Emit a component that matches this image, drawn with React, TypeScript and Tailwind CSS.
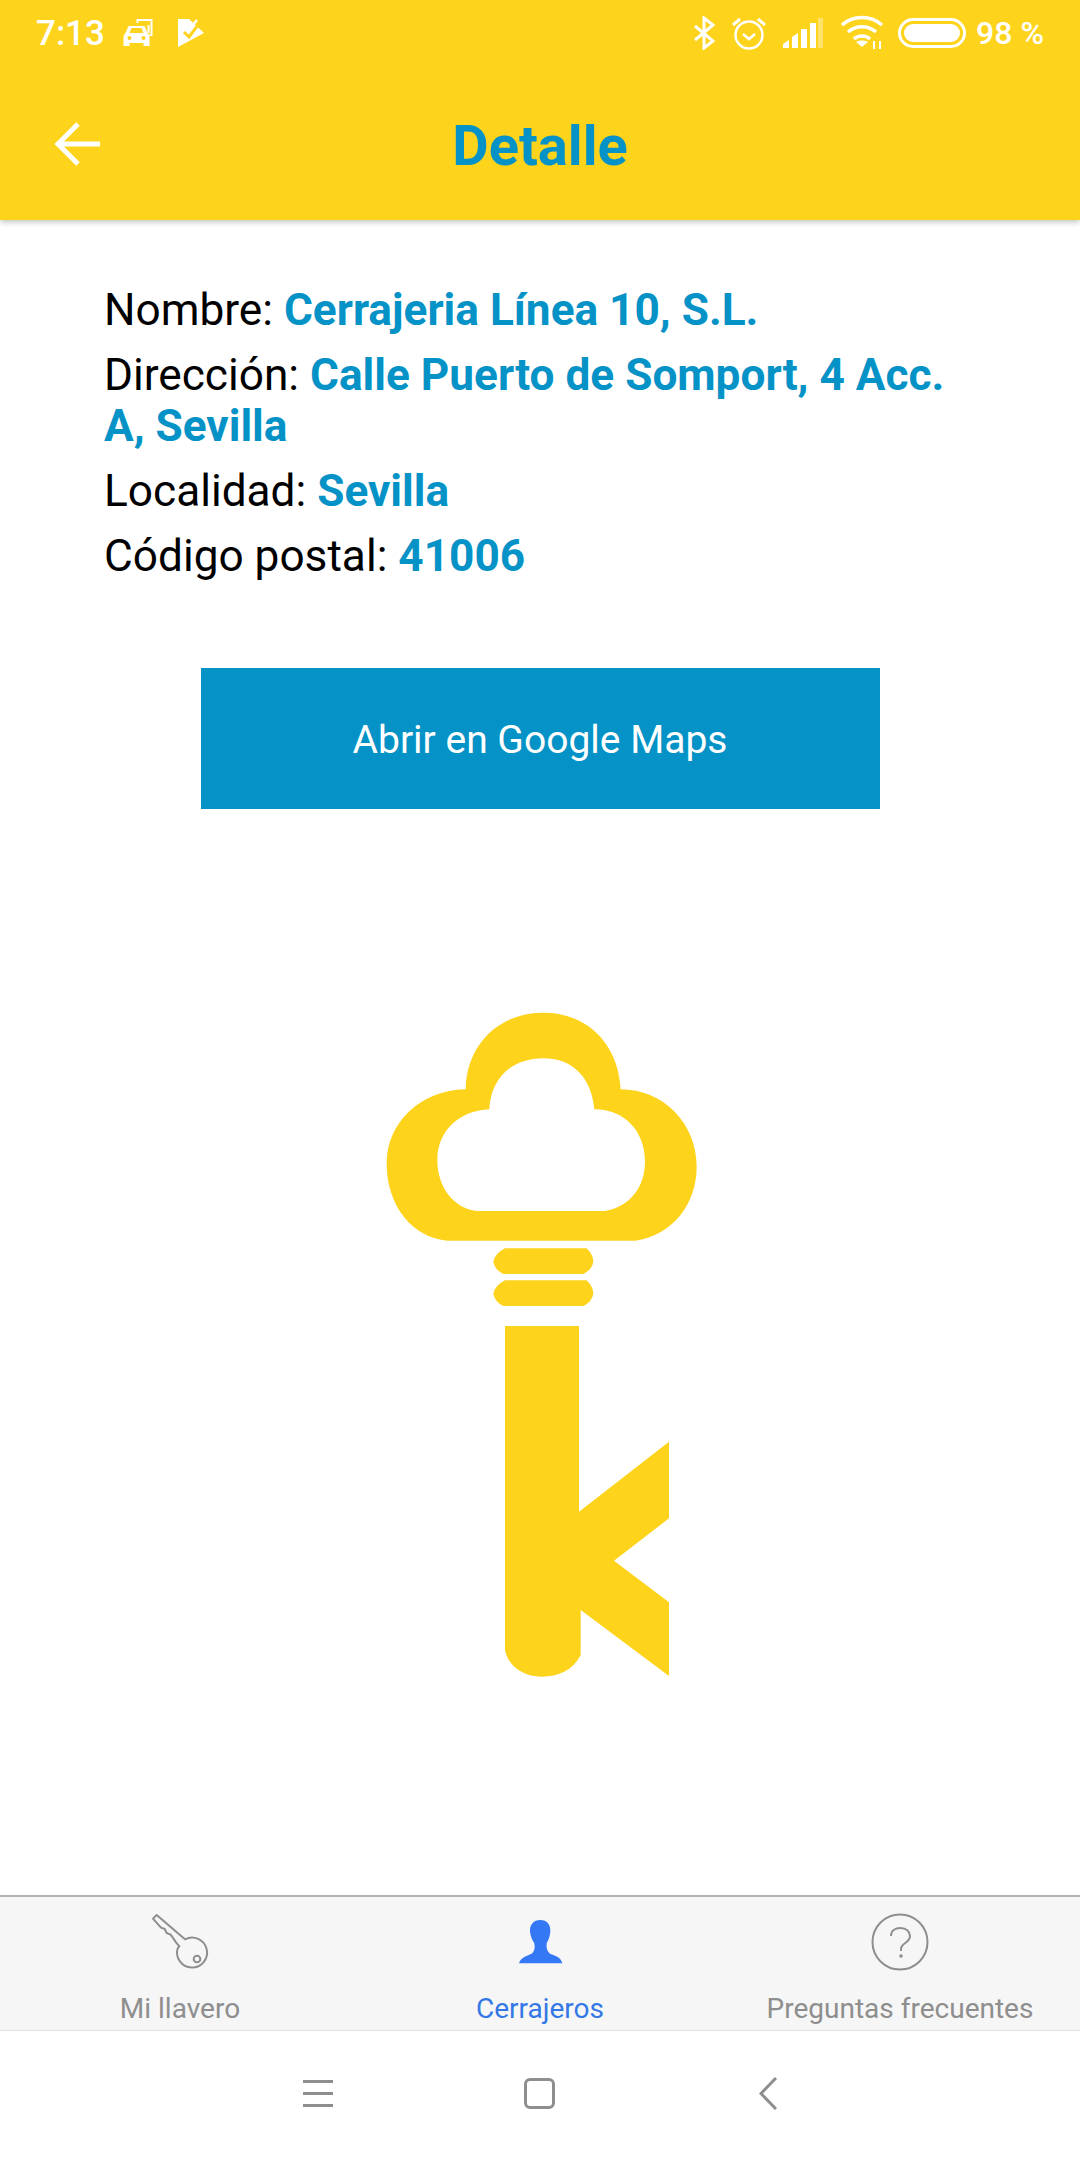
const font = "font-['Roboto',sans-serif]"

function CarIcon() {
  return (
    <svg width="33" height="30" viewBox="0 0 32 30" fill="none" className="ml-[17px]">
      <path d="M3 15l3-7h16l3 7c1 1 2 2 2 4v9h-6v-3H7v3H1v-9c0-2 1-3 2-4z" fill="white" />
      <path d="M7 15l2-5h10l2 5z" fill="#fdd31c" />
      <circle cx="7" cy="20" r="2" fill="#fdd31c" />
      <circle cx="21" cy="20" r="2" fill="#fdd31c" />
      <path d="M15 5V2h14v15h-2" stroke="white" strokeWidth="2" />
      <path d="M26 7v8" stroke="white" strokeWidth="2" />
    </svg>
  )
}

function PlayCheckIcon() {
  return (
    <svg width="28" height="30" viewBox="0 0 28 30" className="ml-[22px]">
      <path d="M1 1H12L27 15L1 29Z" fill="white" />
      <path d="M7 14l5 5 9-12" stroke="#fdd31c" strokeWidth="3" fill="none" />
      <path d="M15 8l5-6" stroke="white" strokeWidth="2.5" />
    </svg>
  )
}

function StatusRight() {
  return (
    <div className="flex items-center">
      <svg width="22" height="34" viewBox="0 0 22 34" fill="none" stroke="white" strokeWidth="3">
        <path d="M2 10l18 15-9 7V2l9 7L2 24" />
      </svg>
      <svg width="36" height="34" viewBox="0 0 36 34" fill="none" stroke="white" strokeWidth="2.5" className="ml-[16px]">
        <circle cx="18" cy="19" r="13.5" />
        <path d="M12 18l6 5 6-5" />
        <path d="M2 9l7-6M34 9l-7-6" strokeWidth="3" />
      </svg>
      <svg width="40" height="30" viewBox="0 0 40 30" fill="white" className="ml-[16px]">
        <path d="M0 30v-4l6-4v8z" />
        <path d="M9 30V19l6-4v15z" />
        <rect x="18" y="11" width="6" height="19" />
        <rect x="27" y="5" width="6" height="25" />
        <rect x="35" y="0" width="5" height="30" opacity="0.35" />
      </svg>
      <svg width="44" height="36" viewBox="0 0 44 36" fill="none" stroke="white" strokeWidth="3.5" className="ml-[17px]">
        <path d="M2 10c11-10 29-10 40 0" />
        <path d="M8 17c8-7 20-7 28 0" />
        <path d="M14 24c4-4 12-4 16 0" />
        <path d="M22 32l-6-5c3-2 9-2 12 0z" fill="white" stroke="none" />
        <path d="M34 26v8M40 26v8" strokeWidth="2" />
      </svg>
      <div className="ml-[14px] flex h-[30px] w-[68px] items-center rounded-full border-[3px] border-white p-[3px]">
        <div className="h-full w-full rounded-full bg-white" />
      </div>
      <span className="ml-[10px] text-[32px] font-medium leading-none text-white">98 %</span>
    </div>
  )
}

function Row({ label, value }: { label: string; value: string }) {
  return (
    <p className="mb-[14px] text-[44.2px] leading-[51px] text-black">
      {label} <span className="font-bold text-[#0592c6]">{value}</span>
    </p>
  )
}

function KeyLogo() {
  return (
    <svg width="360" height="710" viewBox="0 0 1080 2130" className="mx-auto mt-[181px] block">
      <path
        fillRule="evenodd"
        fill="#fdd31c"
        d="M262 752H825C940 735 1010 640 1010 530C1010 400 910 298 782 298C775 160 680 68 550 68C420 68 320 160 317 298C180 300 80 400 80 520C80 650 160 745 262 752ZM350 663H735C810 650 855 590 855 515C855 425 795 358 703 358C695 265 640 205 550 205C455 205 392 265 388 358C295 362 232 425 232 510C232 590 280 655 350 663Z"
      />
      <path fill="#fdd31c" d="M435 775H680Q700 795 700 815Q697 838 670 852H430Q405 840 400 815Q405 790 435 775Z" />
      <path fill="#fdd31c" d="M435 871H680Q700 891 700 911Q697 934 670 948H430Q405 936 400 911Q405 886 435 871Z" />
      <path
        fill="#fdd31c"
        d="M435 1008H657V1565L927 1355V1585L762 1712L927 1837V2058L662 1860V1995C640 2040 595 2060 545 2060C490 2060 445 2030 435 1980Z"
      />
    </svg>
  )
}

function KeyIcon() {
  return (
    <svg width="80" height="70" viewBox="0 0 240 210" fill="none" stroke="#8e8e8e" strokeWidth="6" strokeLinejoin="round">
      <path d="M39 41L50 30L135 103A45 45 0 1 1 113 130L118 124L108 112L100 100L92 89L80 84L74 72L63 68Z" />
      <circle cx="171" cy="162" r="10" />
    </svg>
  )
}

function PersonIcon() {
  return (
    <svg width="80" height="70" viewBox="0 0 240 210" fill="#3478f6">
      <path d="M121 45C141 45 152 59 151 79C150 95 146 104 140 115C138 130 142 140 150 146C165 152 183 156 187 175H57C61 158 80 153 95 146C103 140 106 130 103 115C96 104 91 93 90 79C89 59 101 45 121 45Z" />
    </svg>
  )
}

function HelpIcon() {
  return (
    <svg width="80" height="70" viewBox="0 0 80 70" fill="none" stroke="#8e8e8e" strokeWidth="2">
      <circle cx="40" cy="37" r="27.5" />
      <path d="M31 31c0-5 4-8 9.500-8s9.500 3.500 9.500 8c0 7-9 7-9 13v2" />
      <circle cx="41" cy="51" r="1.8" fill="#8e8e8e" stroke="none" />
    </svg>
  )
}

export default function App() {
  const tabs = [
    { label: 'Mi llavero', icon: <KeyIcon />, active: false },
    { label: 'Cerrajeros', icon: <PersonIcon />, active: true },
    { label: 'Preguntas frecuentes', icon: <HelpIcon />, active: false },
  ]

  return (
    <div className={`flex h-[2160px] w-[1080px] flex-col overflow-hidden bg-white ${font}`}>
      {/* Header */}
      <header className="z-10 h-[220px] shrink-0 bg-[#fdd31c] shadow-[0_2px_6px_rgba(0,0,0,0.25)]">
        <div className="flex h-[66px] items-center justify-between px-[36px]">
          <div className="flex items-center">
            <span className="text-[35px] font-medium leading-none text-white">7:13</span>
            <CarIcon />
            <PlayCheckIcon />
          </div>
          <StatusRight />
        </div>
        <div className="relative flex h-[154px] items-center justify-center pt-[6px]">
          <svg width="46" height="44" viewBox="0 0 46 44" fill="none" stroke="white" strokeWidth="5" className="absolute left-[54px] top-[56px]">
            <path d="M46 22H4M24 2L4 22l20 20" />
          </svg>
          <h1 className="text-[56px] font-bold leading-none text-[#0592c6]">Detalle</h1>
        </div>
      </header>

      {/* Contenido */}
      <main className="flex-1 pt-[65px]">
        <div className="pl-[104px] pr-[105px]">
          <Row label="Nombre:" value="Cerrajeria Línea 10, S.L." />
          <Row label="Dirección:" value="Calle Puerto de Somport, 4 Acc. A, Sevilla" />
          <Row label="Localidad:" value="Sevilla" />
          <Row label="Código postal:" value="41006" />
        </div>
        <button className="mx-auto mt-[86px] flex h-[141px] w-[679px] items-center justify-center bg-[#0592c6] pt-[3px] text-[39px] text-white">
          Abrir en Google Maps
        </button>
        <KeyLogo />
      </main>

      {/* Tabs */}
      <nav className="grid h-[136px] shrink-0 grid-cols-3 border-y border-t-2 border-t-[#b2b2b2] border-b-[#e2e2e2] bg-[#f6f6f6]">
        {tabs.map((tab) => (
          <div key={tab.label} className="flex flex-col items-center">
            <div className="h-[96px] pt-[8px]">{tab.icon}</div>
            <span className={`text-[28px] leading-[32px] ${tab.active ? 'text-[#3478e6]' : 'text-[#8e8e8e]'}`}>{tab.label}</span>
          </div>
        ))}
      </nav>

      {/* Barra del sistema */}
      <div className="flex h-[129px] shrink-0 items-center justify-center pb-[5px]">
        <div className="flex h-[27px] w-[30px] flex-col justify-between">
          <div className="h-[3px] bg-[#8e8e8e]" />
          <div className="h-[3px] bg-[#8e8e8e]" />
          <div className="h-[3px] bg-[#8e8e8e]" />
        </div>
        <div className="ml-[191px] h-[31px] w-[31px] rounded-[6px] border-[3px] border-[#8e8e8e]" />
        <svg width="18" height="33" viewBox="0 0 18 33" fill="none" stroke="#8e8e8e" strokeWidth="3" className="ml-[204px]">
          <path d="M17 1L2 16.500 17 32" />
        </svg>
      </div>
    </div>
  )
}
